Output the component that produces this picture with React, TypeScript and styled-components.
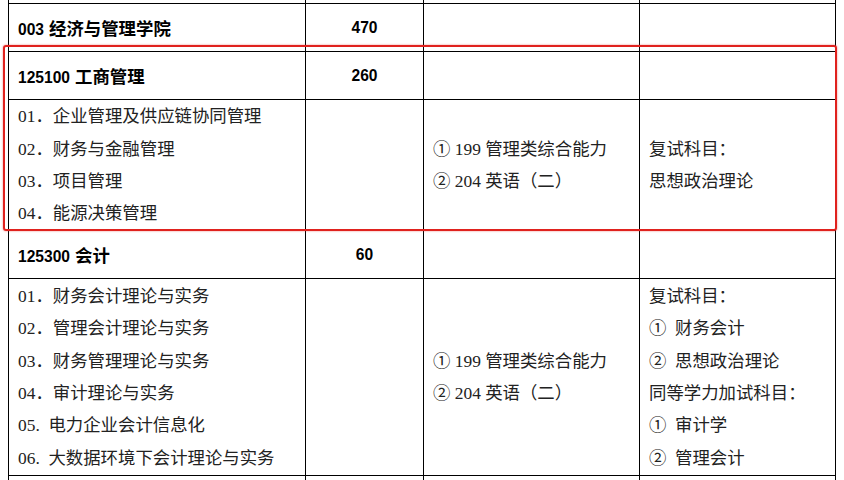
import React from 'react';
import styled, { createGlobalStyle } from 'styled-components';

const GlobalStyle = createGlobalStyle`
  html, body { margin: 0; padding: 0; background: #fff; }
  body { width: 844px; height: 480px; overflow: hidden; }
`;

const Sheet = styled.div`
  box-sizing: border-box;
  margin-left: 8px;
  width: 828px;
  border-left: 1px solid #000;
`;

const Row = styled.div<{ $h: number }>`
  display: grid;
  grid-template-columns: 297px 118px 216px 196px;
  height: ${(p) => p.$h}px;
`;

const Cell = styled.div<{ $center?: boolean }>`
  box-sizing: border-box;
  border-right: 1px solid #000;
  border-bottom: 1px solid #000;
  padding-left: ${(p) => (p.$center ? 0 : 9)}px;
  display: flex;
  flex-direction: column;
  justify-content: center;
  align-items: ${(p) => (p.$center ? 'center' : 'flex-start')};
  overflow: hidden;
`;

const Code = styled.span`
  font-family: "Liberation Sans", Arial, sans-serif;
  font-weight: 700;
  font-size: 15.6px;
  color: #000;
`;

const Title = styled.span`
  font-family: "Noto Sans CJK SC", sans-serif;
  font-weight: 700;
  font-size: 17.4px;
  color: #000;
  margin-left: 5px;
`;

const HeadLine = styled.div`
  display: flex;
  align-items: baseline;
  white-space: nowrap;
`;

const Line = styled.div`
  font-family: "Liberation Serif", "Noto Sans CJK SC", serif;
  font-size: 17.4px;
  line-height: 32.4px;
  color: #222;
  white-space: pre;
`;

const Group = styled.div`
  position: relative;
`;

const Highlight = styled.div`
  position: absolute;
  top: -7px;
  left: -6px;
  right: -1px;
  bottom: 0;
  border: 2px solid #e0221e;
  border-radius: 3px;
  box-shadow: 0 0 2px rgba(224, 34, 30, 0.6);
  pointer-events: none;
`;

const EmptyRow: React.FC<{ h: number }> = ({ h }) => (
  <Row $h={h}>
    <Cell />
    <Cell />
    <Cell />
    <Cell />
  </Row>
);

const HeadRow: React.FC<{ code: string; title: string; count: string }> = ({ code, title, count }) => (
  <Row $h={48}>
    <Cell>
      <HeadLine>
        <Code>{code}</Code>
        <Title>{title}</Title>
      </HeadLine>
    </Cell>
    <Cell $center>
      <Code>{count}</Code>
    </Cell>
    <Cell />
    <Cell />
  </Row>
);

const Lines: React.FC<{ items: string[] }> = ({ items }) => (
  <>
    {items.map((t, i) => (
      <Line key={i}>{t}</Line>
    ))}
  </>
);

const DetailRow: React.FC<{ h: number; dirs: string[]; exams: string[]; notes: string[] }> = ({
  h,
  dirs,
  exams,
  notes,
}) => (
  <Row $h={h}>
    <Cell>
      <Lines items={dirs} />
    </Cell>
    <Cell />
    <Cell>
      <Lines items={exams} />
    </Cell>
    <Cell>
      <Lines items={notes} />
    </Cell>
  </Row>
);

const exams = ['① 199 管理类综合能力', '② 204 英语（二）'];

export default function App() {
  return (
    <>
      <GlobalStyle />
      <Sheet>
        <EmptyRow h={4} />
        <HeadRow code="003" title="经济与管理学院" count="470" />
        <Group>
          <HeadRow code="125100" title="工商管理" count="260" />
          <DetailRow
            h={131}
            dirs={['01．企业管理及供应链协同管理', '02．财务与金融管理', '03．项目管理', '04．能源决策管理']}
            exams={exams}
            notes={['复试科目：', '思想政治理论']}
          />
          <Highlight />
        </Group>
        <HeadRow code="125300" title="会计" count="60" />
        <DetailRow
          h={197}
          dirs={[
            '01．财务会计理论与实务',
            '02．管理会计理论与实务',
            '03．财务管理理论与实务',
            '04．审计理论与实务',
            '05.  电力企业会计信息化',
            '06.  大数据环境下会计理论与实务',
          ]}
          exams={exams}
          notes={['复试科目：', '①  财务会计', '②  思想政治理论', '同等学力加试科目：', '①  审计学', '②  管理会计']}
        />
        <EmptyRow h={10} />
      </Sheet>
    </>
  );
}
